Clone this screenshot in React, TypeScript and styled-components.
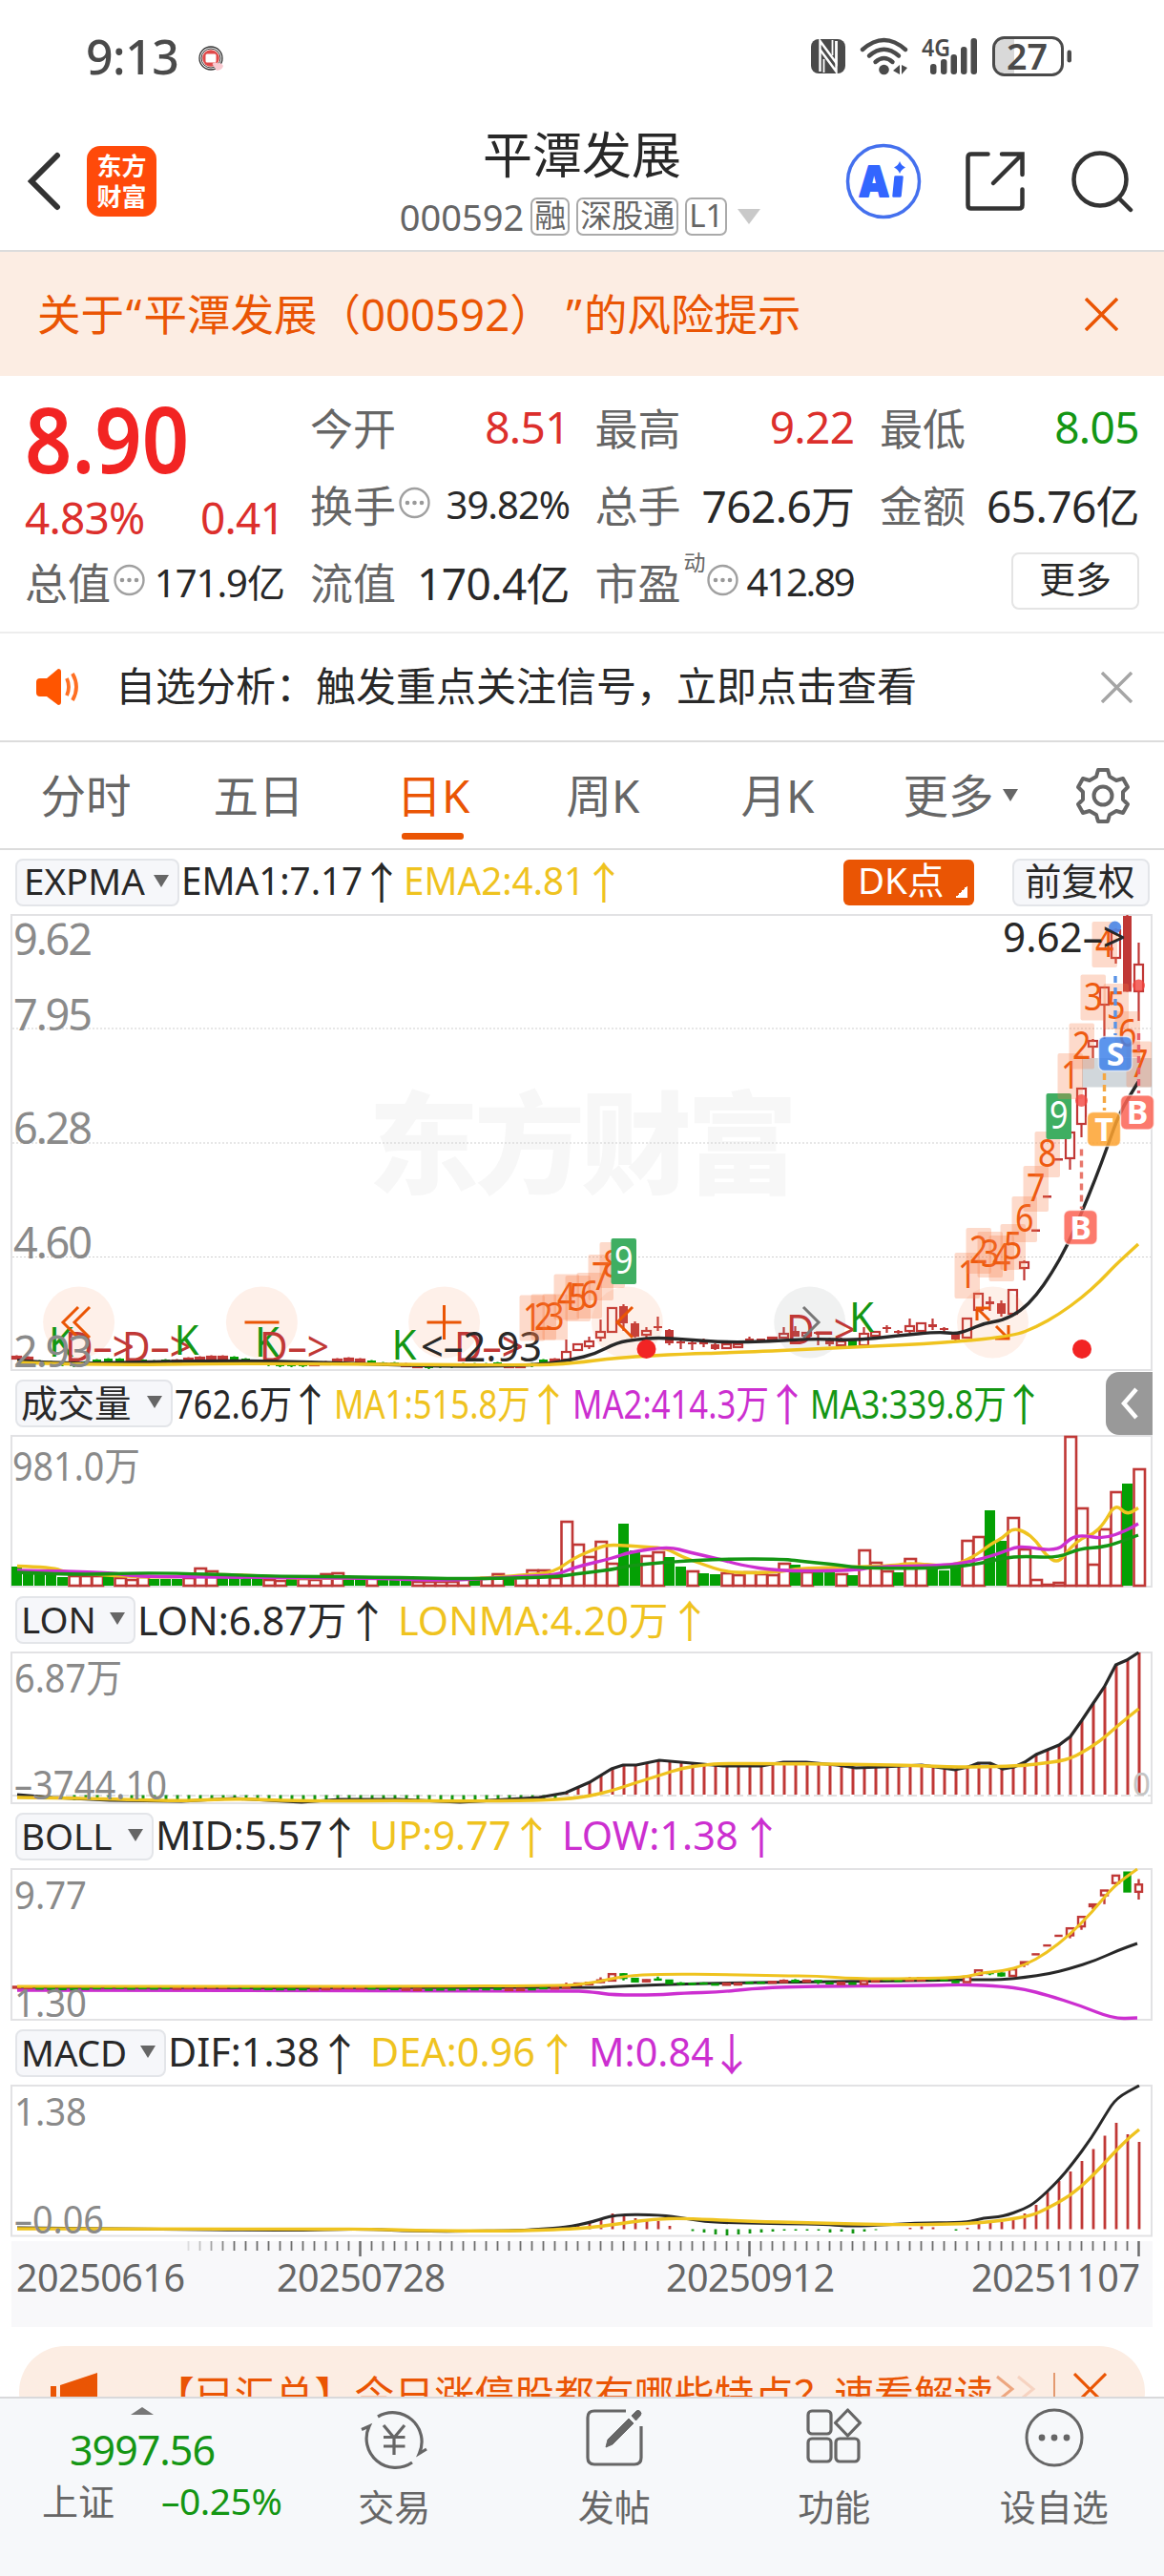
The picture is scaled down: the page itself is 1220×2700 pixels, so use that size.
import type { ReactNode } from "react";
import styled, { createGlobalStyle } from "styled-components";

const theme = {
  colors: {
    red: "#dc2f2c",
    green: "#149614",
    orange: "#ea5504",
    text: "#282828",
    label: "#666666",
    axis: "#8a8a8a",
    line: "#e2e2e4",
    yellow: "#efc31f",
    magenta: "#cc2fd0",
    candle: "#c03836",
    volume: "#04a004",
    peach: "#fcede3",
  },
};

const c = theme.colors;

// ---------- data ----------

type Point = [number, number];
// kind, body top, body bottom, wick top, wick bottom
type Candle = [string, number, number, number, number];

const STEP = 12;
const FIRST_X = 17.5;
const barX = (i: number) => FIRST_X + i * STEP;

const early = "rrggghggggggggrrrrrgggggggrrrrrgggrrgggggggrrggrr";
const earlyY = [
  1423, 1424, 1428, 1429, 1430, 1431, 1429, 1427, 1426, 1426, 1428, 1427, 1428,
  1427, 1427, 1425, 1424, 1423, 1423, 1424, 1426, 1429, 1430, 1431, 1431, 1431,
  1430, 1429, 1426, 1425, 1426, 1428, 1430, 1430, 1431, 1432, 1433, 1432, 1432,
  1431, 1431, 1431, 1430, 1432, 1432, 1431, 1427, 1426,
];

const lateCandles: Candle[] = [
  ["h", 1416, 1425, 1404, 1425],
  ["h", 1408, 1415, 1408, 1415],
  ["h", 1405, 1411, 1401, 1414],
  ["h", 1395, 1402, 1383, 1406],
  ["h", 1370, 1396, 1370, 1396],
  ["f", 1369, 1387, 1367, 1395],
  ["f", 1387, 1401, 1385, 1402],
  ["h", 1394, 1399, 1391, 1402],
  ["f", 1390, 1392, 1380, 1395],
  ["f", 1394, 1408, 1393, 1410],
  ["f", 1406, 1408, 1402, 1414],
  ["f", 1407, 1409, 1406, 1415],
  ["f", 1406, 1409, 1403, 1412],
  ["f", 1409, 1414, 1408, 1415],
  ["h", 1408, 1413, 1407, 1414],
  ["h", 1408, 1412, 1408, 1412],
  ["f", 1403, 1405, 1401, 1408],
  ["f", 1403, 1405, 1403, 1405],
  ["h", 1401, 1404, 1401, 1404],
  ["h", 1397, 1402, 1391, 1402],
  ["f", 1395, 1401, 1390, 1401],
  ["h", 1396, 1400, 1396, 1402],
  ["f", 1396, 1398, 1396, 1410],
  ["f", 1405, 1409, 1402, 1411],
  ["h", 1405, 1410, 1402, 1410],
  ["g", 1405, 1411, 1405, 1411],
  ["h", 1397, 1410, 1391, 1410],
  ["h", 1395, 1400, 1395, 1404],
  ["f", 1391, 1393, 1389, 1397],
  ["f", 1395, 1397, 1394, 1398],
  ["h", 1389, 1395, 1382, 1397],
  ["h", 1386, 1395, 1386, 1395],
  ["f", 1388, 1391, 1382, 1394],
  ["f", 1392, 1394, 1391, 1396],
  ["f", 1397, 1404, 1396, 1405],
  ["h", 1381, 1402, 1381, 1403],
  ["h", 1355, 1373, 1355, 1373],
  ["f", 1364, 1367, 1359, 1374],
  ["f", 1366, 1377, 1363, 1380],
  ["h", 1351, 1377, 1351, 1378],
  ["h", 1322, 1329, 1321, 1342],
  ["d", 1288.5, 1291, 1289, 1290],
  ["d", 1253, 1255.5, 1254, 1255],
  ["d", 1214, 1216.5, 1215, 1216],
  ["h", 1186, 1214, 1186, 1226],
  ["h", 1140, 1178, 1140, 1192],
  ["h", 1090, 1097, 1089, 1109],
  ["h", 1034, 1053, 1034, 1089],
  ["h", 974, 1004, 973, 1010],
  ["f", 960, 1039.5, 959, 1040],
  ["h", 1010, 1039, 988, 1070],
];

const candles: Candle[] = [
  ...earlyY.map((y, i): Candle => [
    early[i] === "r" ? "h" : "g",
    y - 2,
    y + 1,
    y - 2.5,
    y + 2,
  ]),
  ...lateCandles,
];

const emaFast: Point[] = [
  [18, 1426], [60, 1429.5], [140, 1428], [220, 1426], [300, 1427], [400, 1430],
  [460, 1432], [520, 1432], [570, 1430], [600, 1425], [624, 1419], [647, 1407],
  [667, 1404], [689, 1402], [719, 1404], [762, 1407], [806, 1406], [853, 1403],
  [897, 1405], [940, 1400], [984, 1396], [1001, 1398], [1013, 1395],
  [1031, 1387], [1051, 1384], [1070, 1374], [1086, 1358], [1102, 1335],
  [1119, 1305], [1134, 1270], [1148, 1236], [1161, 1201], [1173, 1167],
  [1193, 1134],
];
const emaSlow: Point[] = [
  [18, 1428], [100, 1431], [250, 1429], [400, 1430], [560, 1431], [600, 1429],
  [647, 1423], [719, 1419], [762, 1418], [897, 1412], [999, 1407],
  [1063, 1400], [1086, 1391], [1110, 1377.5], [1134, 1360], [1153, 1343],
  [1169, 1326], [1193, 1304],
];

const countdowns: { from: number; tops: number[] }[] = [
  { from: 45, tops: [1357.5, 1356.5, 1356.5, 1335.5, 1337, 1334, 1315, 1302, 1298] },
  { from: 83, tops: [1313, 1287, 1291, 1295, 1283, 1254, 1222, 1186, 1146] },
  { from: 92, tops: [1104, 1072.5, 1021.5, 966, 1031, 1060, 1091.5] },
];

const signals: { text: string; x: number; y: number }[] = [
  { text: "K", x: 51, y: 1422 },
  { text: "D–>", x: 68, y: 1427 },
  { text: "D–>", x: 128, y: 1427 },
  { text: "K", x: 182.5, y: 1420 },
  { text: "K", x: 267, y: 1422 },
  { text: "D–>", x: 272, y: 1427 },
  { text: "K", x: 410.5, y: 1425 },
  { text: "D–>", x: 476, y: 1427 },
  { text: "D–>", x: 824, y: 1409 },
  { text: "K", x: 890, y: 1396 },
];

const volumeKinds =
  "gggggrrrgrrrgggrrrggggrrgrrrrggrgggrrrrrgrrgrrrrrrrrrggrrggrggrrrrrrgrggrgrrrgrrgggrrggrrrrrrrrrrgr".split("");
const volumeTops = [
  1642, 1645, 1647, 1649, 1653, 1651, 1651, 1651, 1651, 1653, 1655, 1652, 1655,
  1655, 1655, 1653, 1643, 1646, 1652, 1652, 1652, 1652, 1655, 1656, 1654, 1654,
  1655, 1649, 1648, 1653, 1654, 1653, 1654, 1654, 1655, 1657, 1657, 1657, 1657,
  1654, 1655, 1653, 1649, 1654, 1652, 1645, 1645, 1653, 1594, 1618, 1631, 1615,
  1638, 1597, 1625, 1630, 1626, 1632, 1642, 1646, 1649, 1650, 1648, 1650, 1647,
  1649, 1650, 1638, 1640, 1647, 1648, 1647, 1649, 1651, 1624, 1637, 1646, 1648,
  1633, 1639, 1639, 1646, 1643, 1614, 1610, 1583, 1615, 1590, 1623, 1655, 1660,
  1658, 1505, 1580, 1639, 1602, 1563, 1555, 1539,
];

const volMa1: Point[] = [
  [18, 1641.5], [55, 1642.5], [71, 1649], [170, 1654], [233, 1649], [316, 1655],
  [395, 1653], [467, 1657], [550, 1651], [581, 1648], [601, 1633], [630, 1621],
  [641, 1619], [679, 1621.5], [699, 1623], [715, 1632], [738, 1640],
  [758, 1647], [786, 1649], [821, 1647], [837, 1644], [877, 1643], [940, 1641],
  [953, 1638], [995, 1642], [1019, 1633], [1039, 1618], [1051, 1612],
  [1061, 1602], [1074, 1605], [1086, 1615], [1096, 1630], [1109, 1639],
  [1122, 1622], [1134, 1612], [1146, 1608], [1157, 1597], [1169, 1576],
  [1181, 1588], [1193, 1580.5],
];
const volMa2: Point[] = [
  [18, 1646], [111, 1647.5], [138, 1652], [198, 1653], [395, 1654], [467, 1657],
  [550, 1652], [583, 1651], [601, 1643], [643, 1633], [659, 1627], [701, 1621],
  [722, 1627], [758, 1635], [774, 1640], [817, 1647], [897, 1646], [916, 1642],
  [995, 1641], [1025, 1635], [1051, 1627], [1063, 1622], [1074, 1621],
  [1108, 1626], [1122, 1612], [1134, 1609], [1157, 1613], [1181, 1604],
  [1193, 1597],
];
const volMa3: Point[] = [
  [18, 1648], [79, 1651], [158, 1648], [277, 1652], [395, 1653], [494, 1655],
  [581, 1653], [601, 1650], [643, 1645], [659, 1641], [703, 1637], [758, 1634],
  [821, 1634], [845, 1637], [877, 1640], [897, 1643], [944, 1644],
  [995, 1643], [1027, 1639], [1051, 1633], [1074, 1631], [1108, 1633],
  [1132, 1623], [1153, 1622], [1169, 1618], [1193, 1609],
];

const lon: Point[] = [
  [18, 1881], [55, 1884], [115, 1887], [190, 1888], [245, 1885], [316, 1889],
  [356, 1886], [419, 1886], [482, 1889], [565, 1884], [593, 1879], [618, 1868],
  [641, 1854], [653, 1850], [667, 1850], [691, 1845], [736, 1849], [758, 1851],
  [798, 1851], [821, 1847], [845, 1847], [877, 1850], [897, 1853], [924, 1852],
  [966, 1850], [1001, 1855], [1015, 1852], [1025, 1848], [1038, 1848],
  [1051, 1854], [1063, 1852], [1074, 1847], [1086, 1839], [1110, 1829],
  [1122, 1820], [1134, 1803], [1146, 1785], [1157.5, 1768], [1169.5, 1745],
  [1181, 1740], [1193.5, 1732],
];
const lonMa: Point[] = [
  [18, 1884], [100, 1885], [190, 1888], [245, 1885], [316, 1888], [419, 1887],
  [482, 1888], [565, 1887], [600, 1885], [620, 1882], [641, 1877], [665, 1869],
  [691, 1861], [715, 1853], [738, 1850], [758, 1848], [936, 1849.5],
  [995, 1852], [1035, 1852], [1074, 1850.5], [1094, 1848], [1110, 1846],
  [1122, 1843], [1134, 1837], [1153, 1825], [1169, 1811], [1181, 1801],
  [1193.5, 1791],
];

const bollUp: Point[] = [
  [18, 2082], [584, 2082.5], [623, 2078], [654, 2071], [693, 2069],
  [763, 2069.5], [817, 2071], [856, 2071], [895, 2074], [957, 2074],
  [1012, 2072.5], [1027, 2068], [1051, 2066], [1074, 2060], [1097, 2047],
  [1121, 2028], [1144, 2005], [1167, 1977], [1192, 1959],
];
const bollMid: Point[] = [
  [18, 2084], [615, 2084], [646, 2082], [700, 2080], [778, 2078], [934, 2076.5],
  [1012, 2075], [1051, 2075], [1074, 2072.5], [1099, 2069], [1121, 2063.5],
  [1148, 2055], [1171, 2044.5], [1192, 2037],
];
const bollLow: Point[] = [
  [18, 2086], [591, 2086], [623, 2088], [642, 2091], [689, 2091], [716, 2089],
  [755, 2088], [786, 2084.5], [833, 2082], [973, 2081], [1012, 2080],
  [1051, 2082], [1074, 2085], [1097, 2091], [1132, 2102], [1167, 2116],
  [1192, 2115],
];

const dif: Point[] = [
  [18, 2335], [140, 2336], [300, 2338], [380, 2336], [440, 2339], [545, 2338],
  [568, 2336], [591, 2335], [623, 2328.5], [644, 2321], [693, 2321.5],
  [716, 2325], [751, 2330], [864, 2331], [895, 2334], [965, 2329.5],
  [1012, 2330], [1031, 2324.5], [1051, 2323.5], [1074, 2315], [1086, 2308],
  [1109, 2286], [1124, 2268], [1144, 2241], [1159, 2216], [1170, 2199],
  [1194, 2186],
];
const dea: Point[] = [
  [18, 2336], [300, 2337], [380, 2336], [440, 2338], [545, 2338.5],
  [615, 2335.5], [654, 2330], [685, 2326], [716, 2325], [778, 2328],
  [856, 2330], [934, 2332], [1012, 2331], [1051, 2327.5], [1082, 2322],
  [1097, 2315], [1121, 2302], [1144, 2282], [1167, 2257], [1183, 2241],
  [1194, 2232],
];
const macdBars: Record<number, number> = {
  47: 2335, 48: 2334, 49: 2332, 50: 2330, 51: 2327, 52: 2320, 53: 2321,
  54: 2325, 55: 2327, 56: 2328, 57: 2333, 59: 2338.5, 60: 2340, 61: 2342,
  62: 2343, 63: 2342, 64: 2341, 65: 2340, 66: 2339, 67: 2338, 68: 2338,
  69: 2338, 70: 2338, 71: 2340, 72: 2339, 73: 2341, 74: 2339, 75: 2337.5,
  78: 2335, 79: 2333.5, 80: 2334.5, 82: 2338, 83: 2335, 84: 2328, 85: 2328,
  86: 2329, 87: 2327, 88: 2320, 89: 2311, 90: 2297.5, 91: 2286, 92: 2276,
  93: 2265, 94: 2252.5, 95: 2238.5, 96: 2225, 97: 2237, 98: 2245,
};

// ---------- chart pieces ----------

// smooths a line by passing through the middle of each pair of points
const smooth = (pts: Point[]) => {
  let d = `M${pts[0][0]} ${pts[0][1]}`;
  for (let i = 1; i < pts.length - 1; i++) {
    const [x, y] = pts[i];
    const [nx, ny] = pts[i + 1];
    d += ` Q${x} ${y} ${(x + nx) / 2} ${(y + ny) / 2}`;
  }
  const last = pts[pts.length - 1];
  return `${d} L${last[0]} ${last[1]}`;
};

const Line = ({ pts, color, width = 3.4 }: { pts: Point[]; color: string; width?: number }) => (
  <path d={smooth(pts)} fill="none" stroke={color} strokeWidth={width} strokeLinejoin="round" />
);

const valueAt = (pts: Point[], x: number) => {
  const i = Math.max(1, pts.findIndex((p) => p[0] >= x));
  const [x0, y0] = pts[i - 1];
  const [x1, y1] = pts[i];
  return y0 + ((y1 - y0) * (x - x0)) / (x1 - x0);
};

const Frame = ({ top, bottom }: { top: number; bottom: number }) => (
  <rect x={12} y={top} width={1195} height={bottom - top} fill="none" stroke={c.line} strokeWidth={2} />
);

const CandleMark = ({ i, candle }: { i: number; candle: Candle }) => {
  const [kind, top, bottom, high, low] = candle;
  const x = barX(i);
  const color = kind === "g" ? c.volume : c.candle;
  const solid = kind !== "h";
  return (
    <g stroke={color} strokeWidth={2.2}>
      {kind !== "d" && <path d={`M${x} ${high}V${top}M${x} ${bottom}V${low}`} />}
      <rect
        x={x - 4.5}
        y={solid ? top : top + 1}
        width={9}
        height={Math.max(1, solid ? bottom - top : bottom - top - 1)}
        fill={solid ? color : "#fff"}
        strokeWidth={solid ? 0 : 2.2}
      />
    </g>
  );
};

const Tag = ({ x, y, color, text }: { x: number; y: number; color: string; text: string }) => (
  <g>
    <rect x={x - 17.5} y={y} width={35} height={36} rx={6} fill={color} fillOpacity={0.85} stroke="#fff" strokeOpacity={0.6} strokeWidth={1.5} />
    <ChartText x={x} y={y + 30} fontSize={34} fontWeight={700} textAnchor="middle" fill="#fff">
      {text}
    </ChartText>
  </g>
);

const toolXs = [82.6, 274.4, 465.6, 657.4, 848.7, 1040.5];

const PriceChart = () => (
  <Plot viewBox="0 958 1220 480" height={480}>
    <ChartText x={386} y={1242} fontSize={116} fontWeight={900} fill="#f7f7f7" textLength={450}>
      东方财富
    </ChartText>
    {[1078, 1198, 1317.5].map((y) => (
      <path key={y} d={`M13 ${y}H1206`} stroke="#cfcfcf" strokeWidth={1.2} strokeDasharray="2 2" />
    ))}
    <Frame top={959} bottom={1436} />
    {candles.map((candle, i) => (
      <CandleMark key={i} i={i} candle={candle} />
    ))}
    {toolXs.map((x) => (
      <circle key={x} cx={x} cy={1386} r={37.5} fill={x === 848.7 ? "#8c8f94" : "#f98d55"} fillOpacity={0.13} />
    ))}
    <path d="M1134 1109H1207V1139.5H1134Z" fill="#8c9ba5" fillOpacity={0.4} />
    {signals.map((s, i) => (
      <ChartText
        key={i}
        x={s.x}
        y={s.y}
        fontSize={43}
        fill={s.text === "K" ? c.green : c.candle}
        textLength={s.text === "K" ? 26 : 73}
        lengthAdjust="spacingAndGlyphs"
      >
        {s.text}
      </ChartText>
    ))}
    <ChartText x={441} y={1427} fontSize={43} fill={c.text} textLength={127} lengthAdjust="spacingAndGlyphs">{"<–2.93"}</ChartText>
    <g stroke={c.orange} strokeWidth={3} fill="none">
      <path d="M82 1370L66 1386L82 1402M94 1370L78 1386L94 1402" />
      <path d="M256.500 1386H292.500" />
      <path d="M447.500 1386H483.500M465.500 1368V1404" />
      <path d="M663 1370L647 1386L663 1402" />
      <path d="M1037 1384L1024 1371M1024 1384V1371H1038" />
      <path d="M1044 1390L1057 1403M1043 1403H1057V1389" />
    </g>
    <path d="M842 1370L858 1386L842 1402" stroke="#777" strokeWidth={3} fill="none" />
    {countdowns.map(({ from, tops }) =>
      tops.map((top, k) => {
        const x = barX(from + k);
        const done = k === 8;
        return (
          <g key={`${from}-${k}`}>
            <rect x={x - 13} y={top} width={26.5} height={48} rx={2} fill={done ? "#3fae62" : "#f97b43"} fillOpacity={done ? 1 : 0.28} />
            <ChartText
              x={x - 9.5}
              y={top + 37}
              fontSize={40}
              fill={done ? "#fff" : "#ee5a10"}
              textLength={19.5}
              lengthAdjust="spacingAndGlyphs"
            >
              {k + 1}
            </ChartText>
          </g>
        );
      })
    )}
    <Line pts={emaFast} color={c.text} />
    <Line pts={emaSlow} color={c.yellow} />
    <g strokeWidth={3.4} strokeDasharray="7 5" fill="none">
      <path d="M1169 1023V1085" stroke="#5b94e6" />
      <path d="M1157.500 1125V1164" stroke="#f5a742" />
      <path d="M1133.500 1204.500V1267" stroke="#e8776c" />
      <path d="M1193.500 1083V1146" stroke="#e8606c" />
    </g>
    <circle cx={1168.600} cy={972} r={6.5} fill="#4a86e8" fillOpacity={0.9} />
    <circle cx={1133.500} cy={1153.500} r={6.5} fill="#f2453f" fillOpacity={0.8} />
    <circle cx={1193.500} cy={1033} r={6.5} fill="#f2453f" fillOpacity={0.8} />
    <Tag x={1169} y={1086.500} color="#3f83ea" text="S" />
    <Tag x={1157} y={1165.500} color="#fda22f" text="T" />
    <Tag x={1132.500} y={1268.500} color="#fb6354" text="B" />
    <Tag x={1192} y={1148} color="#fb6354" text="B" />
    <circle cx={677.500} cy={1414} r={10} fill="#f22424" />
    <circle cx={1134} cy={1414} r={10} fill="#f22424" />
    <ChartText x={1051} y={997.500} fontSize={44} fill={c.text} textLength={129} lengthAdjust="spacingAndGlyphs">{"9.62–>"}</ChartText>
    {([["9.62", 1001], ["7.95", 1080], ["6.28", 1199], ["4.60", 1319], ["2.93", 1433]] as [string, number][]).map(
      ([text, y]) => (
        <AxisText key={text} x={14} y={y} fontSize={45} textLength={83}>
          {text}
        </AxisText>
      )
    )}
  </Plot>
);

const VolumeChart = () => (
  <Plot viewBox="0 1504 1220 161" height={161}>
    <Frame top={1505} bottom={1663} />
    {volumeTops.map((top, i) => {
      const up = volumeKinds[i] === "r";
      return (
        <rect
          key={i}
          x={up ? barX(i) - 5 : barX(i) - 5.5}
          y={up ? top + 1 : top}
          width={up ? 11.5 : 11}
          height={Math.max(1, 1662 - top - (up ? 1 : 0))}
          fill={up ? "#fff" : c.volume}
          stroke={c.candle}
          strokeWidth={up ? 2.6 : 0}
        />
      );
    })}
    <Line pts={volMa1} color={c.yellow} />
    <Line pts={volMa2} color={c.magenta} />
    <Line pts={volMa3} color={c.green} />
    <AxisText x={13} y={1552} fontSize={41} textLength={134} lengthAdjust="spacingAndGlyphs">981.0万</AxisText>
  </Plot>
);

const LonChart = () => (
  <Plot viewBox="0 1731 1220 161" height={161}>
    <Frame top={1732} bottom={1890} />
    <path d="M13 1882H1206" stroke="#d8d8d8" strokeWidth={1.5} strokeDasharray="10 4" />
    {candles.map((_, i) => {
      const x = barX(i) + 0.5;
      const y = valueAt(lon, barX(i));
      if (i < 5) return null;
      return y > 1880 ? (
        <path key={i} d={`M${x} 1881.500V1887`} stroke={c.green} strokeWidth={3} />
      ) : (
        <path key={i} d={`M${x} ${y}V1881`} stroke={c.candle} strokeWidth={3} />
      );
    })}
    <polyline points={lon.join(" ")} fill="none" stroke={c.text} strokeWidth={3.2} />
    <Line pts={lonMa} color={c.yellow} />
    <AxisText x={15} y={1774} fontSize={41} textLength={113} lengthAdjust="spacingAndGlyphs">6.87万</AxisText>
    <AxisText x={15} y={1886} fontSize={41} textLength={160} lengthAdjust="spacingAndGlyphs">–3744.10</AxisText>
    <ChartText x={1187} y={1882} fontSize={33} fill="#c4c4c4">0</ChartText>
  </Plot>
);

// maps a height on the price chart to the flatter BOLL scale
const toBoll = (y: number) => 1993 + (y - 1078) * 0.2608;

const BollChart = () => (
  <Plot viewBox="0 1958 1220 161" height={161}>
    <Frame top={1959} bottom={2117} />
    <Line pts={bollMid} color={c.text} width={3} />
    <Line pts={bollLow} color={c.magenta} />
    {candles.map(([kind, top, bottom, high, low], i) => {
      const x = barX(i);
      const y = toBoll(top);
      const h = toBoll(bottom) - y;
      const color = kind === "f" || kind === "g" ? c.volume : c.candle;
      return (
        <g key={i} stroke={color} strokeWidth={2.4}>
          <path d={`M${x} ${toBoll(high)}V${y}M${x} ${y + h}V${toBoll(low)}`} />
          <rect x={x - 3.5} y={y} width={7} height={Math.max(1, h)} fill={kind === "h" && h > 3 ? "#fff" : color} strokeWidth={kind === "h" ? 2.4 : 1.4} />
        </g>
      );
    })}
    <Line pts={bollUp} color={c.yellow} width={3} />
    <AxisText x={15} y={2001} fontSize={40} textLength={76} lengthAdjust="spacingAndGlyphs">9.77</AxisText>
    <AxisText x={15} y={2114} fontSize={40} textLength={76} lengthAdjust="spacingAndGlyphs">1.30</AxisText>
  </Plot>
);

const MacdChart = () => (
  <Plot viewBox="0 2185 1220 160" height={160}>
    <Frame top={2186} bottom={2343.500} />
    {Object.entries(macdBars).map(([i, y]) => (
      <path key={i} d={`M${barX(Number(i)) + 0.5} ${y}V2336.500`} stroke={y > 2336.5 ? c.green : c.candle} strokeWidth={2.8} />
    ))}
    <Line pts={dif} color={c.text} width={3} />
    <Line pts={dea} color={c.yellow} />
    <AxisText x={15} y={2228} fontSize={40} textLength={76} lengthAdjust="spacingAndGlyphs">1.38</AxisText>
    <AxisText x={15} y={2341} fontSize={40} textLength={94} lengthAdjust="spacingAndGlyphs">–0.06</AxisText>
  </Plot>
);

const DateAxis = () => (
  <Plot viewBox="0 2345 1220 95" height={95}>
    <rect x={12} y={2349} width={1196} height={90} fill="#f8f8fa" />
    {candles.map((_, i) => {
      if (i < 15) return null;
      const long = i === 30 || i === 64 || i === 98;
      return (
        <path
          key={i}
          d={`M${barX(i)} 2349V${long ? 2365 : 2359}`}
          stroke="#6d6d6d"
          strokeWidth={long ? 2.5 : 1.8}
          strokeOpacity={Math.min(1, (i - 14) / 5)}
        />
      );
    })}
    {([["20250616", 17], ["20250728", 290], ["20250912", 698], ["20251107", 1018]] as [string, number][]).map(([text, x]) => (
      <ChartText key={text} x={x} y={2401.500} fontSize={39.500} fill={c.label} textLength={177}>
        {text}
      </ChartText>
    ))}
  </Plot>
);

// ---------- icons ----------

const Cross = ({ size, color, width = 3.5 }: { size: number; color: string; width?: number }) => (
  <svg width={size} height={size} viewBox="0 0 34 34" fill="none" stroke={color} strokeWidth={width}>
    <path d="M1 1L33 33M33 1L1 33" />
  </svg>
);

const InfoDots = () => (
  <svg width="33" height="34" viewBox="0 0 33 34">
    <circle cx="16.500" cy="17" r="15" fill="none" stroke="#a0a0a0" strokeWidth="2.400" />
    <circle cx="9" cy="17" r="2.300" fill="#999" />
    <circle cx="16.500" cy="17" r="2.300" fill="#999" />
    <circle cx="24" cy="17" r="2.300" fill="#999" />
  </svg>
);

const StatusIcons = () => (
  <svg width="275" height="44" viewBox="850 37 275 44">
    <rect x="850" y="41" width="36" height="36" rx="8" fill="#4a4a4a" />
    <path d="M859.500 75V43L876.500 66V43" fill="none" stroke="#fff" strokeWidth="2.400" />
    <path d="M859.500 52L876.500 75V43" fill="none" stroke="#fff" strokeWidth="2.400" />
    <path d="M863.500 76V62M872.500 42V58" fill="none" stroke="#fff" strokeWidth="1.800" />
    <g fill="none" stroke="#4a4a4a" strokeWidth="4.400" strokeLinecap="round">
      <path d="M904 52Q926.500 32 949 52" />
      <path d="M911 58.500Q926.500 45 942 58.500" />
      <path d="M917.500 65Q926.500 57 935.500 65" />
    </g>
    <circle cx="926.500" cy="73" r="5.300" fill="#4a4a4a" />
    <path d="M936 74L943 68V78M945 68V78L951 71Z" fill="#4a4a4a" />
    <g fill="#4a4a4a">
      <rect x="975" y="67" width="6.500" height="11" rx="3" />
      <rect x="986" y="62" width="6.500" height="16" rx="3" />
      <rect x="996.500" y="57" width="6.500" height="21" rx="3" />
      <rect x="1007" y="49" width="6.500" height="29" rx="3" />
      <rect x="1017.500" y="40" width="6.500" height="38" rx="3" />
    </g>
    <ChartText x="966" y="58.500" fontSize="26" fontWeight={600} fill="#4a4a4a" textLength="30" lengthAdjust="spacingAndGlyphs">4G</ChartText>
    <path d="M1053 40H1063V78H1053Q1043 78 1043 68V50Q1043 40 1053 40Z" fill="#d9d9d9" />
    <rect x="1041.500" y="39.500" width="72" height="39" rx="11" fill="none" stroke="#4a4a4a" strokeWidth="3" />
    <rect x="1118.500" y="52.500" width="4.500" height="13" rx="2.200" fill="#4a4a4a" />
    <ChartText x="1055" y="72.500" fontSize="37" fontWeight={600} fill="#4a4a4a" textLength="43" lengthAdjust="spacingAndGlyphs">27</ChartText>
  </svg>
);

const NotifyIcon = () => (
  <svg width="28" height="30" viewBox="0 0 28 30">
    <circle cx="13" cy="14" r="12" fill="#fff" stroke="#333" strokeWidth="1.300" />
    <circle cx="13" cy="14" r="10" fill="#fff" stroke="#333" strokeWidth="1" />
    <circle cx="13" cy="14" r="8.800" fill="#e04a4a" />
    <rect x="7.500" y="9.500" width="11" height="9" rx="1.500" fill="#fff" />
    <path d="M14.500 20Q17 17 20 19.500Q24 18 26 22Q25 26.500 19 27Z" fill="#f9c9d0" />
  </svg>
);

const AiIcon = () => (
  <svg width="80" height="80" viewBox="0 0 80 80">
    <circle cx="40" cy="40" r="37.500" fill="none" stroke="#4470ee" strokeWidth="3.500" />
    <text
      x="15"
      y="56"
      fontFamily="Open Sans, sans-serif"
      fontWeight="800"
      fontSize="45"
      fill="#3366ff"
      stroke="#3366ff"
      strokeWidth="2"
      strokeLinejoin="round"
      textLength="30"
      lengthAdjust="spacingAndGlyphs"
    >
      A
    </text>
    <path d="M52.500 35.500H59.500L57.500 55.500H50.500Z" fill="#3366ff" stroke="#3366ff" strokeWidth="2.500" strokeLinejoin="round" />
    <path d="M57 19Q58.500 23.500 63 25.500Q58.500 27.500 57 32Q55.500 27.500 51 25.500Q55.500 23.500 57 19Z" fill="#3366ff" />
  </svg>
);

const ShareIcon = () => (
  <svg width="64" height="64" viewBox="0 0 64 64" fill="none" stroke="#333" strokeWidth="4.500" strokeLinecap="round">
    <path d="M24.500 3.500H7Q3.500 3.500 3.500 7V57Q3.500 60.500 7 60.500H57Q60.500 60.500 60.500 57V40.500" />
    <path d="M39 3.500H60.500V25M59.500 4.500L30 34" />
  </svg>
);

const SearchIcon = () => (
  <svg width="66" height="66" viewBox="0 0 66 66" fill="none" stroke="#333" strokeWidth="4.500" strokeLinecap="round">
    <circle cx="31" cy="31" r="27.500" />
    <path d="M51 51L63 63" />
  </svg>
);

const SpeakerIcon = () => (
  <svg width="48" height="40" viewBox="0 0 48 40">
    <path d="M5 11H12L24 1Q27 1 27 4V36Q27 39 24 39L12 30H5Q1 30 1 26V15Q1 11 5 11Z" fill="#ff5500" />
    <path d="M33 11Q37 20 33 29M39 6Q47 20 39 34" fill="none" stroke="#ff6f22" strokeWidth="3.800" />
  </svg>
);

const GearIcon = () => (
  <svg width="58" height="60" viewBox="0 0 58 60" fill="none" stroke="#666" strokeWidth="4" strokeLinejoin="round">
    <path d="M24 3H34L36 10L43 14L50 12L55 21L50 26V34L55 39L50 48L43 46L36 50L34 57H24L22 50L15 46L8 48L3 39L8 34V26L3 21L8 12L15 14L22 10Z" />
    <circle cx="29" cy="30" r="9.500" />
  </svg>
);

const HornIcon = () => (
  <svg width="52" height="52" viewBox="0 0 52 52" fill={c.orange}>
    <path d="M0 14H6V40H0ZM10 13L49 0V52L10 40Z" />
  </svg>
);

const TradeIcon = () => (
  <svg width="72" height="66" viewBox="0 0 72 66" fill="none" stroke="#666" strokeWidth="3.200">
    <path d="M19 9A30.500 30.500 0 0 1 62.500 47.500L70 43" />
    <path d="M55 57A30.500 30.500 0 0 1 10 19L2 22.500" />
    <path d="M25 18L36 31L47 18M25 30.500H47.500M25 40H47.500M36 31V49" />
  </svg>
);

const PostIcon = () => (
  <svg width="62" height="62" viewBox="0 0 62 62" fill="none" stroke="#666" strokeWidth="3.200">
    <path d="M43 3H10Q3 3 3 10V52Q3 59 10 59H52Q59 59 59 52V19" />
    <path d="M22 41L24 33L46 11L51 16L29 38Z" fill="#666" strokeWidth="1" />
    <path d="M49 8L54 3Q56 1.500 58 3.500Q60 5.500 58 8L53.500 13Z" fill="#666" strokeWidth="1" />
  </svg>
);

const AppsIcon = () => (
  <svg width="60" height="60" viewBox="0 0 60 60" fill="none" stroke="#666" strokeWidth="3.200">
    <rect x="3" y="3" width="24" height="24" rx="4" />
    <rect x="3" y="32" width="24" height="24" rx="4" />
    <rect x="32" y="32" width="24" height="24" rx="4" />
    <path d="M44.500 2L57.500 15.500L44.500 29L31.500 15.500Z" strokeLinejoin="round" />
  </svg>
);

const MoreIcon = () => (
  <svg width="62" height="62" viewBox="0 0 62 62">
    <circle cx="31" cy="31" r="29" fill="none" stroke="#666" strokeWidth="3" />
    <circle cx="18" cy="31" r="3.400" fill="#666" />
    <circle cx="31" cy="31" r="3.400" fill="#666" />
    <circle cx="44" cy="31" r="3.400" fill="#666" />
  </svg>
);

// ---------- screen ----------

type Reading = { text: string; w: number; color: string; down?: boolean; gap: number };

const IndicatorRow = ({
  name,
  pill,
  readings,
  size = 41,
  stretch = 1.01,
  children,
}: {
  name: string;
  pill: number;
  readings: Reading[];
  size?: number;
  stretch?: number;
  children?: ReactNode;
}) => (
  <Row $first={name === "EXPMA"}>
    <Pill $width={pill} $wide={name === "EXPMA"}>
      {name}
      <Caret />
    </Pill>
    {readings.map((r) => (
      <Value key={r.text} $color={r.color} $width={r.w} $gap={r.gap} $size={size} $stretch={stretch}>
        <span>{r.text}</span>
        <Arrow>{r.down ? "↓" : "↑"}</Arrow>
      </Value>
    ))}
    {children}
  </Row>
);

export default function App() {
  return (
    <Screen>
      <GlobalStyle />
      <Content>
        <StatusBar>
          <Clock>9:13</Clock>
          <NotifyIcon />
          <StatusIcons />
        </StatusBar>

        <Header>
          <HeaderLeft>
            <svg width="35" height="62" viewBox="0 0 35 62" fill="none" stroke="#333" strokeWidth="6" strokeLinecap="round">
              <path d="M31 4L4 31L31 58" />
            </svg>
            <Logo>
              东方
              <br />
              财富
            </Logo>
          </HeaderLeft>
          <div>
            <Title>平潭发展</Title>
            <SubTitle>
              000592
              <Badge>融</Badge>
              <Badge>深股通</Badge>
              <Badge>L1</Badge>
              <SubCaret />
            </SubTitle>
          </div>
          <HeaderRight>
            <AiIcon />
            <ShareIcon />
            <SearchIcon />
          </HeaderRight>
        </Header>

        <RiskBanner>
          <span>
            关于<Quote>“</Quote>平潭发展（000592） <Quote>”</Quote>的风险提示
          </span>
          <Cross size={35} color={c.orange} />
        </RiskBanner>

        <QuotePanel>
          <PriceColumn>
            <Price><span>8.90</span></Price>
            <Change>
              <span>4.83%</span>
              <span>0.41</span>
            </Change>
            <Cell>
              <Label>总值</Label>
              <InfoDots />
              <Num $small>171.9亿</Num>
            </Cell>
          </PriceColumn>
          <Stats>
            <Cell>
              <Label>今开</Label>
              <Num $color={c.red}>8.51</Num>
            </Cell>
            <Cell>
              <Label>最高</Label>
              <Num $color={c.red}>9.22</Num>
            </Cell>
            <Cell>
              <Label>最低</Label>
              <Num $color={c.green}>8.05</Num>
            </Cell>
            <Cell>
              <Label>换手</Label>
              <InfoDots />
              <Num $small>39.82%</Num>
            </Cell>
            <Cell>
              <Label>总手</Label>
              <Num>762.6万</Num>
            </Cell>
            <Cell>
              <Label>金额</Label>
              <Num>65.76亿</Num>
            </Cell>
            <Cell>
              <Label>流值</Label>
              <Num>170.4亿</Num>
            </Cell>
            <Cell>
              <Label>市盈</Label>
              <Sup>动</Sup>
              <InfoDots />
              <Num $small $tight>412.89</Num>
            </Cell>
            <Cell>
              <MoreButton>更多</MoreButton>
            </Cell>
          </Stats>
        </QuotePanel>

        <Notice>
          <SpeakerIcon />
          <NoticeText>自选分析：触发重点关注信号，立即点击查看</NoticeText>
          <Cross size={33} color="#a5a5a5" />
        </Notice>

        <Tabs>
          <Tab $width={128}>分时</Tab>
          <Tab $width={234}>五日</Tab>
          <Tab $width={132} $active>
            日K
          </Tab>
          <Tab $width={224}>周K</Tab>
          <Tab $width={142}>月K</Tab>
          <Tab $width={241}>
            更多
            <Caret $tab />
          </Tab>
          <GearIcon />
        </Tabs>

        <IndicatorRow
          name="EXPMA"
          pill={172}
          size={40}
          stretch={0.965}
          readings={[
            { text: "EMA1:7.17", w: 190, gap: 42, color: c.text },
            { text: "EMA2:4.81", w: 190, gap: 42, color: c.yellow },
          ]}
        >
          <DkButton>DK点</DkButton>
          <RightsButton $width={144} $wide>
            前复权
          </RightsButton>
        </IndicatorRow>
        <PriceChart />

        <IndicatorRow
          name="成交量"
          pill={165}
          size={42}
          stretch={0.825}
          readings={[
            { text: "762.6万", w: 122, gap: 44, color: c.text },
            { text: "MA1:515.8万", w: 205, gap: 44, color: c.yellow },
            { text: "MA2:414.3万", w: 205, gap: 43, color: c.magenta },
            { text: "MA3:339.8万", w: 204, gap: 44, color: c.green },
          ]}
        >
          <DrawerHandle>
            <svg width="18" height="34" viewBox="0 0 18 34" fill="none" stroke="#fff" strokeWidth="4.500">
              <path d="M16 2L3 17L16 32" />
            </svg>
          </DrawerHandle>
        </IndicatorRow>
        <VolumeChart />

        <IndicatorRow
          name="LON"
          pill={126}
          readings={[
            { text: "LON:6.87万", w: 221, gap: 51, color: c.text },
            { text: "LONMA:4.20万", w: 286, gap: 44, color: c.yellow },
          ]}
        />
        <LonChart />

        <IndicatorRow
          name="BOLL"
          pill={145}
          readings={[
            { text: "MID:5.57", w: 173, gap: 50, color: c.text },
            { text: "UP:9.77", w: 150, gap: 51, color: c.yellow },
            { text: "LOW:1.38", w: 189, gap: 44, color: c.magenta },
          ]}
        />
        <BollChart />

        <IndicatorRow
          name="MACD"
          pill={158}
          readings={[
            { text: "DIF:1.38", w: 160, gap: 51, color: c.text },
            { text: "DEA:0.96", w: 176, gap: 52, color: c.yellow },
            { text: "M:0.84", w: 130, gap: 44, color: c.magenta, down: true },
          ]}
        />
        <MacdChart />
        <DateAxis />

        <Promo>
          <HornIcon />
          <PromoText>【已汇总】今日涨停股都有哪些特点？速看解读</PromoText>
          <svg width="44" height="34" viewBox="0 0 44 34" fill="none" strokeWidth="3">
            <path d="M2 4L18 17L2 30" stroke="#eda67f" />
            <path d="M24 4L40 17L24 30" stroke="#f6d3c1" />
          </svg>
          <Divider />
          <Cross size={35} color={c.orange} width={3} />
        </Promo>
      </Content>

      <BottomNav>
        <IndexBox>
          <UpCaret />
          <IndexValue>3997.56</IndexValue>
          <IndexLine>
            <span>上证</span>
            <IndexPct>–0.25%</IndexPct>
          </IndexLine>
        </IndexBox>
        <NavItem>
          <TradeIcon />
          交易
        </NavItem>
        <NavItem>
          <PostIcon />
          发帖
        </NavItem>
        <NavItem>
          <AppsIcon />
          功能
        </NavItem>
        <NavItem>
          <MoreIcon />
          设自选
        </NavItem>
      </BottomNav>
    </Screen>
  );
}

// ---------- styles ----------

const GlobalStyle = createGlobalStyle`
  * {
    box-sizing: border-box;
  }

  body {
    margin: 0;
    background: #fff;
    font-family: "Noto Sans", "Noto Sans CJK SC", sans-serif;
    color: ${c.text};
  }

  svg {
    display: block;
    flex-shrink: 0;
  }
`;

const Screen = styled.div`
  display: flex;
  flex-direction: column;
  width: 1220px;
  height: 2700px;
  overflow: hidden;
  white-space: nowrap;
`;

const Content = styled.div`
  height: 2512px;
  overflow: hidden;
`;

const Plot = styled.svg`
  width: 1220px;
`;

const ChartText = styled.text`
  font-family: "Noto Sans", "Noto Sans CJK SC", sans-serif;
`;

const AxisText = styled(ChartText)`
  fill: ${c.axis};
`;

const StatusBar = styled.div`
  display: flex;
  align-items: center;
  height: 110px;
  padding: 8px 95px 0 90px;

  svg:nth-of-type(1) {
    margin-left: 19px;
    margin-top: 6px;
  }

  svg:last-child {
    margin-left: auto;
  }
`;

const Clock = styled.div`
  width: 99px;
  font-size: 50px;
  font-weight: 500;
  letter-spacing: -0.5px;
  line-height: 60px;
  color: #4a4a4a;
`;

const Header = styled.div`
  display: grid;
  grid-template-columns: 380px 460px 380px;
  align-items: center;
  height: 154px;
  padding-top: 8px;
  border-bottom: 2px solid #dcdcdc;
  text-align: center;
`;

const HeaderLeft = styled.div`
  display: flex;
  align-items: center;
  gap: 27px;
  padding-left: 29px;
`;

const Logo = styled.div`
  width: 73px;
  height: 74px;
  padding-top: 4px;
  border-radius: 14px;
  background: #ff4a0a;
  color: #fff;
  font-family: "Noto Sans CJK SC", sans-serif;
  font-size: 26px;
  font-weight: 700;
  line-height: 32px;
`;

const HeaderRight = styled.div`
  display: flex;
  align-items: center;
  justify-content: flex-end;
  gap: 46px;
  padding-right: 32px;

  svg:nth-child(2) {
    margin: 0 1px 0 -1px;
  }
`;

const Title = styled.div`
  padding-top: 7px;
  font-size: 52px;
  line-height: 66px;
`;

const SubTitle = styled.div`
  display: flex;
  align-items: center;
  justify-content: center;
  gap: 7px;
  padding: 1px 4px 0 0;
  font-size: 38px;
  line-height: 62px;
  color: ${c.label};
`;

const Badge = styled.span`
  height: 40px;
  padding: 0 2px;
  border: 2px solid #aaa;
  border-radius: 7px;
  font-size: 33px;
  line-height: 34px;
`;

const SubCaret = styled.i`
  margin-left: 4px;
  border: 12px solid transparent;
  border-top: 16px solid #c9c9c9;
  border-bottom: 0;
`;

const RiskBanner = styled.div`
  display: flex;
  align-items: center;
  justify-content: space-between;
  height: 130px;
  padding: 0 48px 0 39px;
  background: ${c.peach};
  color: ${c.orange};
  font-size: 45.5px;

  > span {
    padding-bottom: 5px;
  }
`;

const Quote = styled.b`
  display: inline-block;
  width: 20.5px;
  font-weight: 400;
  text-align: center;
`;

const QuotePanel = styled.div`
  display: flex;
  height: 270px;
  padding: 14px 26px 0 25px;
  border-bottom: 2px solid #ededed;
`;

const PriceColumn = styled.div`
  width: 300px;

  > :last-child {
    width: 273px;
    padding-left: 1px;
  }
`;

const Price = styled.div`
  height: 104px;
  padding-left: 1px;
  font-size: 96px;
  font-weight: 600;
  line-height: 102px;
  color: #f22423;

  span {
    display: inline-block;
    transform: scaleX(0.9);
    transform-origin: left;
  }
`;

const Change = styled.div`
  display: flex;
  justify-content: space-between;
  width: 273px;
  height: 58px;
  padding-left: 1px;
  font-size: 46px;
  letter-spacing: -0.8px;
  line-height: 60px;
  color: ${c.red};
`;

const Stats = styled.div`
  display: grid;
  grid-template-columns: repeat(3, 272px);
  grid-auto-rows: 81px;
  column-gap: 26.5px;
`;

const Cell = styled.div`
  display: flex;
  align-items: center;
  height: 81px;
  padding-bottom: 3px;
  font-size: 45px;

  svg {
    margin-bottom: 3px;
  }
`;

const Label = styled.span`
  margin-right: 3px;
  color: ${c.label};
`;

const Num = styled.span<{ $color?: string; $small?: boolean; $tight?: boolean }>`
  margin-left: auto;
  margin-right: ${(p) => (p.$tight ? 1 : 0)}px;
  color: ${(p) => p.$color ?? c.text};
  font-size: ${(p) => (p.$small ? 40 : 46)}px;
  letter-spacing: ${(p) => (p.$tight ? -2.2 : p.$small ? -1 : -0.6)}px;
`;

const Sup = styled.span`
  align-self: flex-start;
  width: 24px;
  font-size: 23px;
  line-height: 39px;
  color: ${c.label};
`;

const MoreButton = styled.button`
  width: 134px;
  height: 60px;
  margin-left: auto;
  padding: 0 0 6px;
  border: 2px solid #e4e4e4;
  border-radius: 8px;
  background: #fff;
  color: ${c.text};
  font-family: inherit;
  font-size: 38px;
  line-height: 50px;
`;

const Notice = styled.div`
  display: flex;
  align-items: center;
  height: 114px;
  padding: 0 33px 0 37px;
  border-bottom: 2px solid #dcdcdc;
`;

const NoticeText = styled.span`
  flex: 1;
  margin-left: 36px;
  padding-bottom: 7px;
  font-size: 42px;
`;

const Tabs = styled.div`
  display: flex;
  align-items: center;
  height: 113px;
  padding-left: 26px;
  border-bottom: 2px solid #dcdcdc;
`;

const Tab = styled.div<{ $width: number; $active?: boolean }>`
  display: flex;
  align-items: center;
  justify-content: center;
  flex-direction: ${(p) => (p.$active ? "column" : "row")};
  width: ${(p) => p.$width}px;
  font-size: 47.5px;
  line-height: 60px;
  color: ${(p) => (p.$active ? c.orange : c.label)};

  ${(p) =>
    p.$active &&
    `
    padding-top: 16px;

    &::after {
      content: "";
      width: 65px;
      height: 7px;
      margin: 9px 2px 0 0;
      border-radius: 3px;
      background: ${c.orange};
    }
  `}
`;

const Caret = styled.i<{ $tab?: boolean }>`
  margin-left: ${(p) => (p.$tab ? "9px" : "auto")};
  border: 8px solid transparent;
  border-top: 13px solid #666;
  border-bottom: 0;
`;

const Row = styled.div<{ $first?: boolean }>`
  display: flex;
  align-items: center;
  height: ${(p) => (p.$first ? 67 : 66)}px;
  padding-left: 16px;
  padding-right: 12px;
`;

const Pill = styled.div<{ $width: number; $wide?: boolean }>`
  display: flex;
  align-items: center;
  flex-shrink: 0;
  width: ${(p) => p.$width}px;
  height: 50px;
  margin-right: 1px;
  padding: 0 9px 3px ${(p) => (p.$wide ? 7 : 4)}px;
  border: 2px solid #e3e5e9;
  border-radius: 8px;
  background: #f6f7fa;
  font-size: 38.5px;
  line-height: 44px;
`;

const Value = styled.div<{ $color: string; $width: number; $gap: number; $size: number; $stretch: number }>`
  display: flex;
  align-items: center;
  padding-bottom: 5px;
  color: ${(p) => p.$color};
  font-size: ${(p) => p.$size}px;

  > :first-child {
    width: ${(p) => p.$width}px;
    transform: scaleX(${(p) => p.$stretch});
    transform-origin: left;
    margin-left: 1px;
  }

  > :last-child {
    width: ${(p) => p.$gap}px;
  }
`;

const Arrow = styled.span`
  font-family: "Noto Sans CJK SC", sans-serif;
  font-size: 46px;
  line-height: 44px;
  text-indent: -3px;
`;

const DkButton = styled.div`
  width: 137px;
  height: 48px;
  margin-left: auto;
  padding-left: 15px;
  border-radius: 6px;
  background: linear-gradient(135deg, transparent 50%, #fff 50%) right 7px bottom 8px / 13px 13px no-repeat ${c.orange};
  color: #fff;
  font-size: 38.5px;
  line-height: 43px;
`;

const RightsButton = styled(Pill)`
  margin: 0 3px 0 40px;
  padding-left: 11px;
`;

const DrawerHandle = styled.div`
  display: flex;
  align-items: center;
  justify-content: center;
  width: 49px;
  height: 66px;
  margin-left: auto;
  border-radius: 14px 0 0 14px;
  background: #999;
`;

const Promo = styled.div`
  display: flex;
  align-items: flex-start;
  width: 1180px;
  height: 96px;
  margin: 19px auto 0;
  padding: 28px 0 0 33px;
  border-radius: 48px;
  background: ${c.peach};
`;

const PromoText = styled.span`
  margin-left: 57px;
  margin-right: 1px;
  font-family: "Noto Sans CJK SC", sans-serif;
  font-size: 41.9px;
  line-height: 42px;
  color: ${c.orange};
`;

const Divider = styled.i`
  width: 2px;
  height: 40px;
  margin: 0 19px 0 17px;
  background: #e39a70;
`;

const BottomNav = styled.div`
  display: flex;
  height: 188px;
  border-top: 2px solid #d9d9db;
  background: #f6f8fa;
`;

const IndexBox = styled.div`
  display: flex;
  flex-direction: column;
  align-items: center;
  width: 298px;
  padding-top: 9px;
`;

const UpCaret = styled.i`
  border: 12px solid transparent;
  border-bottom: 8px solid #777;
  border-top: 0;
`;

const IndexValue = styled.div`
  margin-top: 10px;
  font-size: 43px;
  letter-spacing: -1px;
  line-height: 54px;
  color: ${c.green};
`;

const IndexLine = styled.div`
  display: flex;
  align-items: center;
  align-self: flex-start;
  gap: 49px;
  padding-left: 44px;
  font-size: 38px;
  line-height: 52px;
  color: ${c.label};
`;

const IndexPct = styled.span`
  color: ${c.green};
  font-size: 39px;
  letter-spacing: -0.5px;
`;

const NavItem = styled.div`
  display: flex;
  flex-direction: column;
  align-items: center;
  justify-content: space-between;
  width: 230.5px;
  height: 140px;
  padding-top: 10px;
  font-size: 38px;
  line-height: 54px;
  color: ${c.label};
`;
